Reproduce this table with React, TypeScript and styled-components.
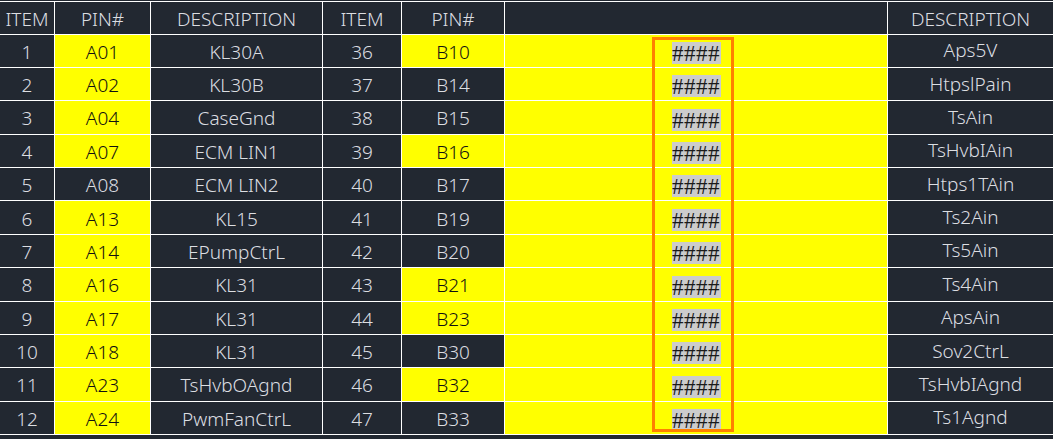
import React from "react";
import styled, { createGlobalStyle } from "styled-components";

const GlobalStyle = createGlobalStyle`
  html, body { margin: 0; padding: 0; background: #222831; }
  body { font-family: "Noto Sans", "Noto Sans CJK SC", sans-serif; }
`;

const Page = styled.div`
  width: 1053px;
  height: 439px;
  background: #222831;
  padding-top: 1px;
  box-sizing: border-box;
  overflow: hidden;
`;

const Grid = styled.div`
  position: relative;
  display: grid;
  grid-template-columns: 54px 95px 171px 78px 102px 382px 165px;
  grid-template-rows: 31.5px repeat(12, 32.375px);
  gap: 1px;
  background: #ffffff;
  border-top: 1px solid #ffffff;
  border-bottom: 1px solid #ffffff;
`;

const Cell = styled.div<{ $hl?: boolean; $dy?: number }>`
  background: ${(p) => (p.$hl ? "#ffff00" : "#222831")};
  color: ${(p) => (p.$hl ? "#111111" : "#dcdee2")};
  font-size: 19px;
  font-weight: 300;
  line-height: 1;
  display: flex;
  align-items: center;
  justify-content: center;
  padding-top: ${(p) => p.$dy ?? 3}px;
  box-sizing: border-box;
  white-space: nowrap;
  overflow: hidden;
`;

const HeadCell = styled(Cell)`
  padding-top: 3px;
`;

const HashCell = styled.div`
  background: #ffff00;
  display: flex;
  align-items: flex-end;
  justify-content: center;
  padding-bottom: 3px;
  box-sizing: border-box;
`;

const Hash = styled.span`
  display: inline-block;
  width: 49px;
  height: 22px;
  background: #cccccc;
  color: #1a1a1a;
  font-family: "Liberation Serif", serif;
  font-size: 23px;
  line-height: 24px;
  letter-spacing: 0.5px;
  text-align: center;
  overflow: visible;
  white-space: nowrap;
`;

const Selection = styled.div`
  position: absolute;
  left: 652px;
  top: 35px;
  width: 82px;
  height: 395px;
  border: 3px solid #ff8000;
  box-sizing: border-box;
  pointer-events: none;
`;

type Row = {
  item: number;
  pin: string;
  pinHl: boolean;
  desc: string;
  item2: number;
  pin2: string;
  pin2Hl: boolean;
  desc2: string;
};

const rows: Row[] = [
  { item: 1, pin: "A01", pinHl: true, desc: "KL30A", item2: 36, pin2: "B10", pin2Hl: true, desc2: "Aps5V" },
  { item: 2, pin: "A02", pinHl: true, desc: "KL30B", item2: 37, pin2: "B14", pin2Hl: false, desc2: "HtpslPain" },
  { item: 3, pin: "A04", pinHl: true, desc: "CaseGnd", item2: 38, pin2: "B15", pin2Hl: false, desc2: "TsAin" },
  { item: 4, pin: "A07", pinHl: true, desc: "ECM LIN1", item2: 39, pin2: "B16", pin2Hl: true, desc2: "TsHvbIAin" },
  { item: 5, pin: "A08", pinHl: false, desc: "ECM LIN2", item2: 40, pin2: "B17", pin2Hl: false, desc2: "Htps1TAin" },
  { item: 6, pin: "A13", pinHl: true, desc: "KL15", item2: 41, pin2: "B19", pin2Hl: false, desc2: "Ts2Ain" },
  { item: 7, pin: "A14", pinHl: true, desc: "EPumpCtrL", item2: 42, pin2: "B20", pin2Hl: false, desc2: "Ts5Ain" },
  { item: 8, pin: "A16", pinHl: true, desc: "KL31", item2: 43, pin2: "B21", pin2Hl: true, desc2: "Ts4Ain" },
  { item: 9, pin: "A17", pinHl: true, desc: "KL31", item2: 44, pin2: "B23", pin2Hl: true, desc2: "ApsAin" },
  { item: 10, pin: "A18", pinHl: true, desc: "KL31", item2: 45, pin2: "B30", pin2Hl: false, desc2: "Sov2CtrL" },
  { item: 11, pin: "A23", pinHl: true, desc: "TsHvbOAgnd", item2: 46, pin2: "B32", pin2Hl: true, desc2: "TsHvbIAgnd" },
  { item: 12, pin: "A24", pinHl: true, desc: "PwmFanCtrL", item2: 47, pin2: "B33", pin2Hl: false, desc2: "Ts1Agnd" },
];

const headers = ["ITEM", "PIN#", "DESCRIPTION", "ITEM", "PIN#", "", "DESCRIPTION"];

export default function App() {
  return (
    <>
      <GlobalStyle />
      <Page>
        <Grid>
          {headers.map((h, i) => (
            <HeadCell key={`h${i}`}>{h}</HeadCell>
          ))}
          {rows.map((r) => (
            <React.Fragment key={r.item}>
              <Cell>{r.item}</Cell>
              <Cell $hl={r.pinHl}>{r.pin}</Cell>
              <Cell>{r.desc}</Cell>
              <Cell>{r.item2}</Cell>
              <Cell $hl={r.pin2Hl}>{r.pin2}</Cell>
              <HashCell>
                <Hash>####</Hash>
              </HashCell>
              <Cell $dy={0}>{r.desc2}</Cell>
            </React.Fragment>
          ))}
          <Selection />
        </Grid>
      </Page>
    </>
  );
}
